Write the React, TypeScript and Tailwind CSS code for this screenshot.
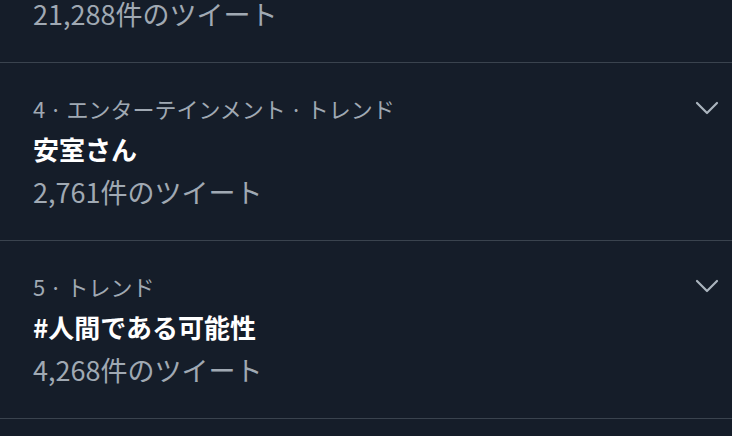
const trends = [
  { rank: 4, category: 'エンターテインメント', title: '安室さん', count: '2,761' },
  { rank: 5, category: null, title: '#人間である可能性', count: '4,268' },
];

const font = { fontFamily: '"Noto Sans CJK JP", "Noto Sans", sans-serif' };

function Chevron() {
  return (
    <svg width="24" height="14" viewBox="0 0 24 14" className="text-[#aab4be]">
      <path d="M2 2 L12 12 L22 2" fill="none" stroke="currentColor" strokeWidth="2.2" strokeLinecap="round" strokeLinejoin="round" />
    </svg>
  );
}

export default function App() {
  return (
    <div className="w-[732px] h-[436px] overflow-hidden bg-[#151d29]" style={font}>
      {/* tail of the previous trend */}
      <div className="h-[63px] border-b border-[#3a434e] pl-[33px]">
        <div className="h-[28px] leading-[28px] text-[27px] text-[#a0a9b3]">21,288件のツイート</div>
      </div>

      {trends.map((t) => (
        <div key={t.rank} className="relative h-[178px] border-b border-[#3a434e] pl-[33px] pr-[14px] pt-[30px]">
          <div className="h-[30px] leading-[30px] text-[22px] text-[#a0a9b3]">
            {t.rank}{'\u2009·\u2009'}{t.category ? `${t.category}\u2009·\u2009` : ''}トレンド
          </div>
          <div className="mt-[10px] h-[32px] leading-[32px] text-[26px] font-bold text-white">{t.title}</div>
          <div className="mt-[11px] h-[32px] leading-[32px] text-[27px] text-[#a0a9b3]">{t.count}件のツイート</div>
          <div className="absolute right-[13px] top-[38px]">
            <Chevron />
          </div>
        </div>
      ))}
    </div>
  );
}
